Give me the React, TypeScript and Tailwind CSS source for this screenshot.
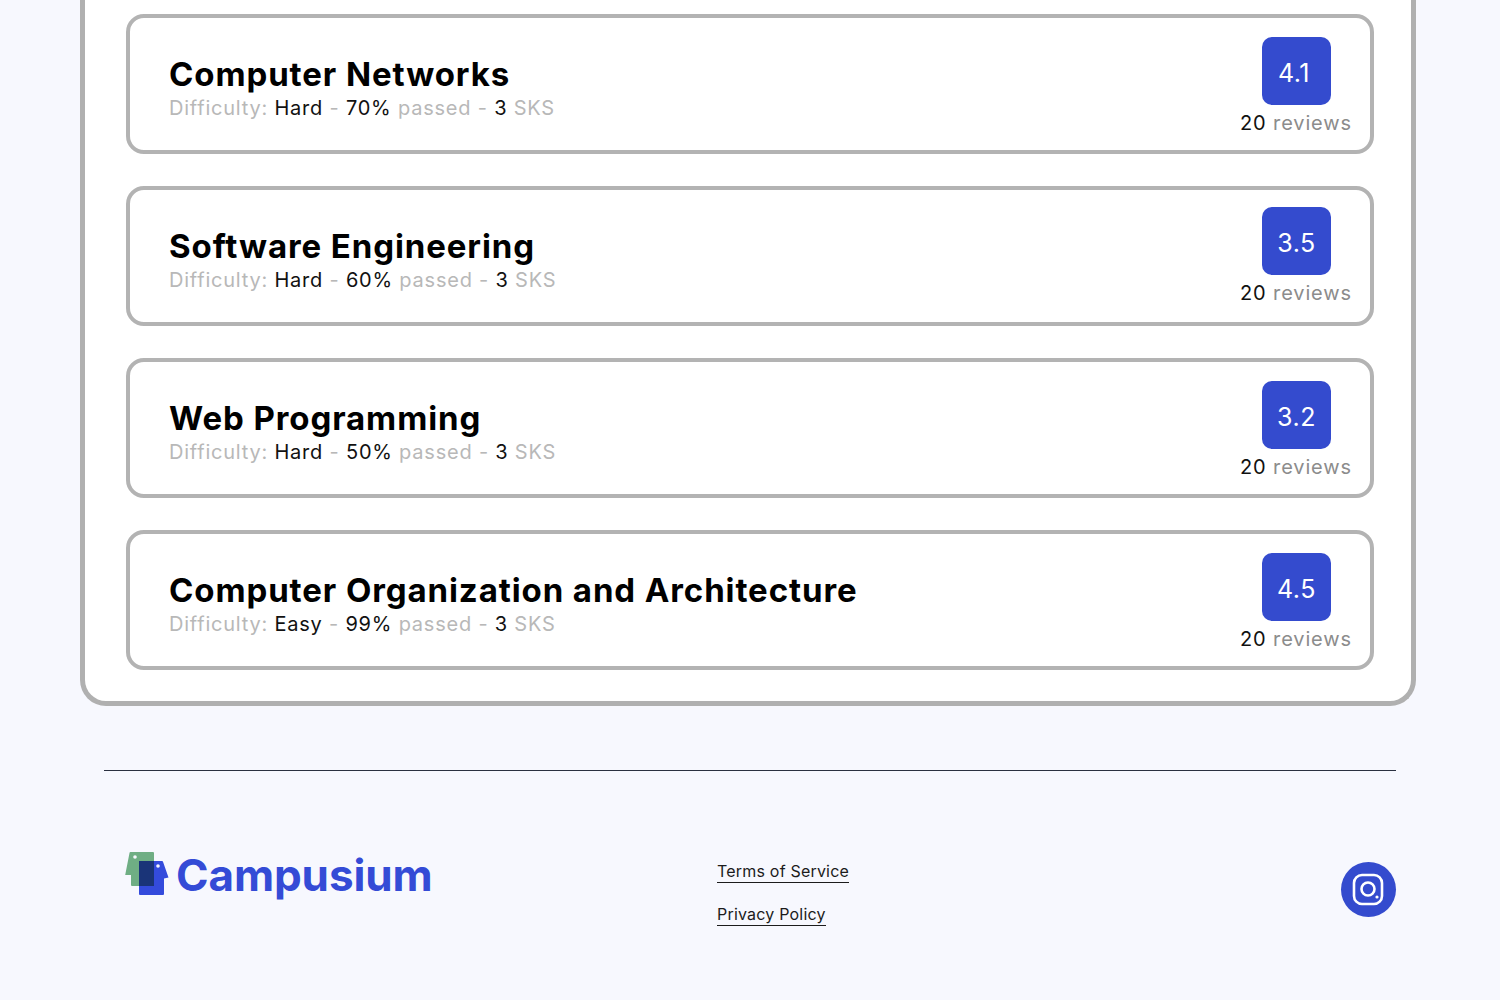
import { useId } from "react";

const courses = [
  { name: "Computer Networks", difficulty: "Hard", passed: "70%", rating: "4.1", badgeTop: "mt-[19px]", ratingInset: "pr-[5px]" },
  { name: "Software Engineering", difficulty: "Hard", passed: "60%", rating: "3.5", badgeTop: "mt-[17px]", ratingInset: "pr-0" },
  { name: "Web Programming", difficulty: "Hard", passed: "50%", rating: "3.2", badgeTop: "mt-[19px]", ratingInset: "pr-0" },
  { name: "Computer Organization and Architecture", difficulty: "Easy", passed: "99%", rating: "4.5", badgeTop: "mt-[19px]", ratingInset: "pr-0" },
];

function CourseCard({ course }: { course: (typeof courses)[number] }) {
  return (
    <article className="flex h-[140px] items-start justify-between rounded-[18px] border-4 border-[#b3b3b3] bg-white pl-[39px] pr-[18px]">
      <div className="pt-[36px]">
        <h3 className="text-[33px] leading-[40px] font-bold tracking-[0.9px] text-black">{course.name}</h3>
        <p className="mt-px text-[20px] leading-[26px] tracking-[0.78px] text-[#b8b8b8]">
          Difficulty: <span className="text-[#111]">{course.difficulty}</span> - <span className="text-[#111]">{course.passed}</span> passed - <span className="text-[#111]">3</span> SKS
        </p>
      </div>
      <div className={`flex flex-col items-end ${course.badgeTop}`}>
        <div className={`mr-[21px] flex h-[68px] w-[69px] items-center justify-center rounded-[10px] bg-[#344bce] pt-[6px] text-[25px] tracking-[0.5px] text-white ${course.ratingInset}`}>
          {course.rating}
        </div>
        <p className="mt-[4px] text-[20px] leading-[28px] tracking-[0.88px] text-[#8c8c8c]">
          <span className="text-[#111]">20</span> reviews
        </p>
      </div>
    </article>
  );
}

function Logo() {
  const id = useId();
  return (
    <svg width="44" height="46" viewBox="0 0 44 46" aria-hidden="true">
      <defs>
        <clipPath id={id}>
          <rect x="14" y="11" width="15" height="25" />
        </clipPath>
      </defs>
      <path d="M4.500 3a1 1 0 0 1 1-1H28a1 1 0 0 1 1 1v32a1 1 0 0 1-1 1H7a1 1 0 0 1-1-1V25H.200z" fill="#6fae84" />
      <path d="M14 12a1 1 0 0 1 1-1h22a1 1 0 0 1 1 .800L43.500 27.500 39 28.500V44a1 1 0 0 1-1 1H15a1 1 0 0 1-1-1z" fill="#344bdc" />
      <rect x="14" y="11" width="15" height="25" fill="#1a3478" clipPath={`url(#${id})`} />
      <circle cx="10" cy="7" r="1.800" fill="#f7f8fe" />
      <circle cx="33" cy="16" r="1.800" fill="#f7f8fe" />
    </svg>
  );
}

export default function App() {
  return (
    <div className="h-[1000px] overflow-hidden bg-[#f7f8fe] font-['Inter',sans-serif] [font-optical-sizing:none]">
      <section className="-mt-[16px] ml-[80px] flex w-[1336px] flex-col gap-[32px] rounded-b-[26px] border-x-[5px] border-b-[5px] border-[#b0b0b0] bg-white pl-[41px] pr-[37px] pt-[30px] pb-[31px]">
        {courses.map((course) => (
          <CourseCard key={course.name} course={course} />
        ))}
      </section>
      <div className="mx-[104px] mt-[64px] h-px bg-[#2a3040]" />
      <footer className="mt-[79px] ml-[125px] mr-[104px] flex items-start">
        <div className="flex w-[592px] items-start">
          <Logo />
          <span className="-mt-[3px] ml-[7px] text-[44px] leading-[56px] font-bold tracking-[-0.1px] text-[#344bd6]">Campusium</span>
        </div>
        <nav className="flex flex-col items-start gap-[21px] pt-[11px] text-[16px] leading-[22px] tracking-[0.2px] text-[#1c1c1c]">
          <a className="border-b border-[#1c1c1c] leading-[21px]">Terms of Service</a>
          <a className="border-b border-[#1c1c1c] leading-[21px]">Privacy Policy</a>
        </nav>
        <a className="mt-[12px] ml-auto flex h-[55px] w-[55px] items-center justify-center rounded-full bg-[#344bce]">
          <svg width="33" height="33" viewBox="0 0 33 33" fill="none" stroke="white" strokeWidth="2.600">
            <rect x="2" y="2" width="28" height="29" rx="8" />
            <circle cx="16" cy="16" r="6.500" />
            <circle cx="25" cy="24" r="1.600" fill="white" stroke="none" />
          </svg>
        </a>
      </footer>
    </div>
  );
}
